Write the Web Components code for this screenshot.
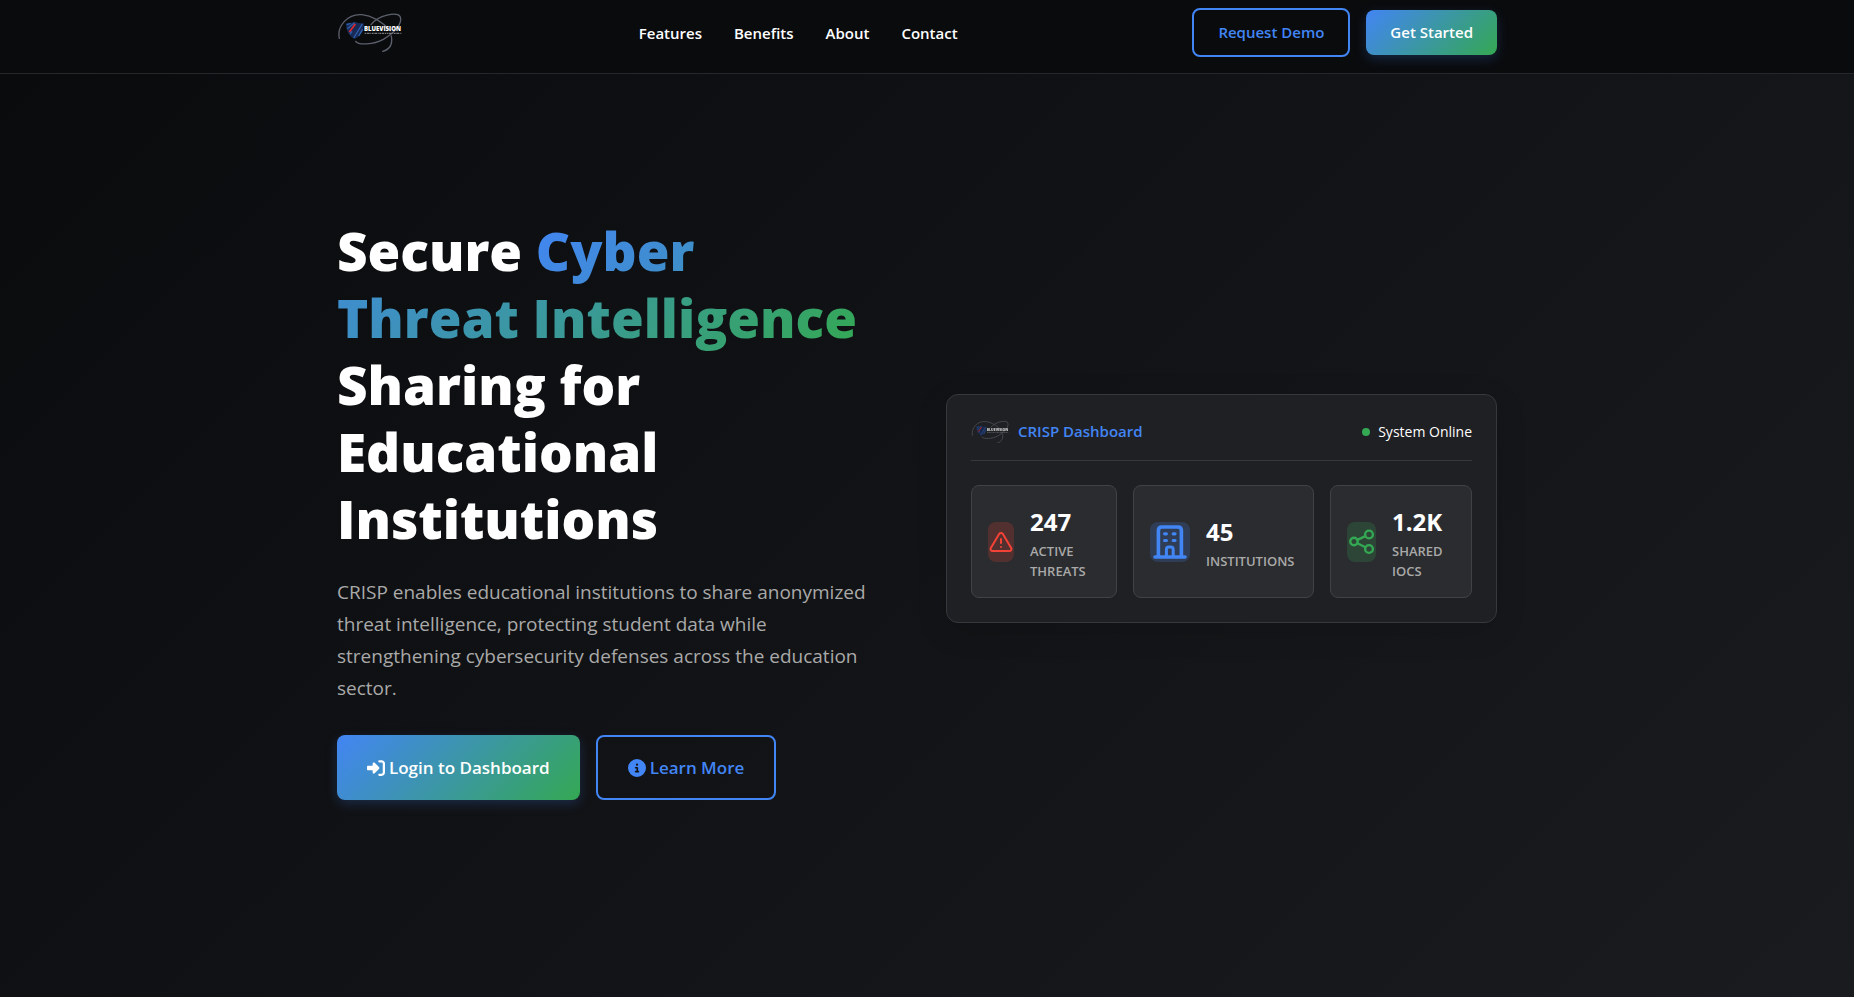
<!DOCTYPE html>
<html lang="en">
<head>
<meta charset="utf-8">
<meta name="viewport" content="width=device-width, initial-scale=1">
<title>CRISP – Cyber Threat Intelligence Sharing</title>
<style>
  html { background: #0a0b0d; }
  body {
    margin: 0;
    font-family: "Segoe UI", "Open Sans", "Noto Sans", sans-serif;
    color: #fff;
    --blue: #4285f4;
    --green: #34a853;
    --red: #f44336;
    --muted: #a9a9a9;
    --brand-gradient: linear-gradient(135deg, var(--blue) 0%, var(--green) 100%);
    --gutter: 20px;
    --container: 1160px;
  }
</style>
</head>
<body>
<landing-page></landing-page>

<script>
class BaseElement extends HTMLElement {
  constructor() {
    super();
    const template = document.createElement('template');
    template.innerHTML = this.constructor.markup;
    this.attachShadow({ mode: 'open' }).append(template.content.cloneNode(true));
  }
}

/* Shield with two orbit lines and the company name */
customElements.define('brand-logo', class extends BaseElement {
  static markup = `
    <style>
      :host { display: block; flex: none; width: 67px; }
      svg { display: block; width: 100%; height: auto; }
    </style>
    <svg viewBox="51 36 201 123" role="img" aria-label="BlueVision">
      <g fill="none" stroke="#5c606c" stroke-width="4" stroke-linecap="round">
        <path d="M58 115C50 78 84 40 126 44C158 47 186 66 212 92"/>
        <path d="M214 108C218 130 210 148 188 154"/>
        <path d="M107 124C116 136 160 134 190 118C222 100 250 70 240 49C230 36 176 44 153 74"/>
      </g>
      <path d="M78 70Q88 71 104 65Q120 71 131 69C132 94 122 108 104 117C86 108 78 92 78 70Z" fill="#182b57"/>
      <g fill="none" stroke="#2f5fae" stroke-width="4">
        <path d="M80 74L92 70M82 86L104 68M127 72L101 114M128 88L116 108M90 102L96 94"/>
      </g>
      <path d="M88 96L106 72" stroke="#e3262c" stroke-width="5"/>
      <text x="132" y="94" font-family="Open Sans, sans-serif" font-weight="800" font-size="18" fill="#fff">BLUEVISION</text>
      <path d="M134 100H245" stroke="#77797e" stroke-width="4" stroke-dasharray="5 2 8 2 3 2"/>
    </svg>`;
});

customElements.define('action-button', class extends BaseElement {
  static markup = `
    <style>
      :host { display: block; }
      button {
        display: flex; align-items: center; justify-content: center; gap: 4px;
        margin: 0; padding: 10px 24px; border: 0; border-radius: 8px;
        font: 600 15px/25px "Segoe UI", "Open Sans", "Noto Sans", sans-serif;
        color: #fff; background: var(--brand-gradient);
        box-shadow: 0 4px 12px rgba(66, 133, 244, .22);
        white-space: nowrap; cursor: pointer;
      }
      :host([outline]) button {
        border: 2px solid var(--blue); color: var(--blue);
        background: none; box-shadow: none;
      }
      :host([large]) button { padding: 18px 30px; font-size: 17px; line-height: 29px; }
      :host([large][outline]) button { padding: 16px 30px; }
      ::slotted(svg) { width: 18px; height: 18px; fill: currentColor; flex: none; }
    </style>
    <button type="button"><slot name="icon"></slot><slot></slot></button>`;
});

customElements.define('site-header', class extends BaseElement {
  static markup = `
    <style>
      :host { display: block; background: #0a0b0d; border-bottom: 1px solid #25272a; }
      header { padding: 8px var(--gutter) 16px 0; }
      .inner {
        max-width: var(--container); margin: 0 auto;
        display: flex; align-items: center; justify-content: space-between;
      }
      nav, .actions { display: flex; align-items: center; }
      nav { gap: 32px; }
      .actions { gap: 16px; }
      a { color: #fff; text-decoration: none; font-weight: 600; font-size: 15px; line-height: 24px; }
    </style>
    <header><div class="inner">
      <brand-logo></brand-logo>
      <nav aria-label="Main">
        <a href="#features">Features</a>
        <a href="#benefits">Benefits</a>
        <a href="#about">About</a>
        <a href="#contact">Contact</a>
      </nav>
      <div class="actions">
        <action-button outline>Request Demo</action-button>
        <action-button>Get Started</action-button>
      </div>
    </div></header>`;
});

customElements.define('stat-tile', class extends BaseElement {
  static markup = `
    <style>
      :host {
        display: flex; align-items: center; gap: 16px; box-sizing: border-box;
        padding: 16px; border: 1px solid #414245; border-radius: 8px; background: #2b2c2f;
        --tone: var(--blue); --tint: rgba(66, 133, 244, .2); --icon-box: 40px;
      }
      :host([tone="red"]) { --tone: var(--red); --tint: rgba(244, 67, 54, .2); --icon-box: 26px; }
      :host([tone="green"]) { --tone: var(--green); --tint: rgba(52, 168, 83, .2); --icon-box: 29px; }
      .icon {
        flex: none; width: var(--icon-box); height: 40px; border-radius: 8px;
        display: flex; align-items: center; justify-content: center;
        color: var(--tone); background: var(--tint);
      }
      .value { font-size: 24px; line-height: 39px; font-weight: 700; }
      .label { font-size: 13px; line-height: 20px; font-weight: 600; color: var(--muted); text-transform: uppercase; }
    </style>
    <div class="icon"><slot name="icon"></slot></div>
    <div>
      <div class="value"><slot name="value"></slot></div>
      <div class="label"><slot></slot></div>
    </div>`;
});

customElements.define('dashboard-card', class extends BaseElement {
  static markup = `
    <style>
      :host {
        display: block; box-sizing: border-box; padding: 24px;
        border: 1px solid #37383b; border-radius: 12px; background: #1f2023;
        box-shadow: 0 8px 32px rgba(0, 0, 0, .12);
      }
      .head {
        display: flex; align-items: center; justify-content: space-between;
        padding-bottom: 16px; margin-bottom: 24px; border-bottom: 1px solid #37383b;
      }
      .title, .status { display: flex; align-items: center; gap: 8px; }
      .title { color: var(--blue); }
      .title brand-logo { width: 39px; opacity: .75; }
      h2 { margin: 0; font-weight: 600; font-size: 15px; line-height: 25px; }
      .status { font-size: 14px; line-height: 22px; }
      .dot { width: 8px; height: 8px; border-radius: 50%; background: var(--green); }
      .stats { display: grid; grid-template-columns: 146fr 181fr 142fr; gap: 16px; }
      svg { display: block; fill: none; stroke: currentColor; stroke-linecap: round; stroke-linejoin: round; }
    </style>
    <div class="head">
      <div class="title"><brand-logo></brand-logo><h2>CRISP Dashboard</h2></div>
      <div class="status"><span class="dot"></span><span>System Online</span></div>
    </div>
    <div class="stats">
      <stat-tile tone="red">
        <svg slot="icon" width="24" height="24" viewBox="0 0 24 24" stroke-width="2">
          <path d="M10.29 3.86L1.82 18a2 2 0 0 0 1.71 3h16.94a2 2 0 0 0 1.71-3L13.71 3.86a2 2 0 0 0-3.42 0zM12 9v4M12 17h.01"/>
        </svg>
        <span slot="value">247</span>Active Threats
      </stat-tile>
      <stat-tile>
        <svg slot="icon" width="34" height="34" viewBox="0 0 34 34" stroke-width="3.6">
          <path d="M2 32H32M5.4 32V5.5Q5.4 2 8.8 2H25Q28.4 2 28.4 5.5V32"/>
          <path d="M13.4 31V24.5Q13.4 22 15.8 22H17.8Q20.2 22 20.2 24.5V31" stroke-width="3"/>
          <path d="M11.6 8.8h1.8M20.2 8.8h1.8M11.6 15.5h1.8M20.2 15.5h1.8" stroke-width="3.2"/>
        </svg>
        <span slot="value">45</span>Institutions
      </stat-tile>
      <stat-tile tone="green">
        <svg slot="icon" width="29" height="28" viewBox="0 0 29 28" stroke-width="2.4">
          <circle cx="7" cy="13.5" r="3.7"/><circle cx="22" cy="6.5" r="3.9"/><circle cx="22" cy="21" r="3.9"/>
          <path d="M10.4 11.9L18.4 8.2M10.4 15.2L18.4 19.2"/>
        </svg>
        <span slot="value">1.2K</span>Shared IoCs
      </stat-tile>
    </div>`;
});

customElements.define('hero-section', class extends BaseElement {
  static markup = `
    <style>
      :host { display: block; background: linear-gradient(135deg, #0a0b0d 0%, #1a1b1f 100%); }
      section { padding: 143px var(--gutter) 143px 0; }
      .inner {
        max-width: var(--container); margin: 0 auto;
        display: grid; grid-template-columns: 1fr 1fr; gap: 58px; align-items: center;
      }
      h1 { margin: 0 0 24px; font-size: 53px; line-height: 67px; font-weight: 800; }
      h1 span { background: var(--brand-gradient); -webkit-background-clip: text; background-clip: text; color: transparent; }
      p { margin: 0 0 31px; font-size: 19px; line-height: 32px; color: var(--muted); }
      .actions { display: flex; gap: 16px; }
    </style>
    <section><div class="inner">
      <div>
        <h1>Secure <span>Cyber Threat Intelligence</span> Sharing for Educational Institutions</h1>
        <p>CRISP enables educational institutions to share anonymized threat intelligence, protecting student data while strengthening cybersecurity defenses across the education sector.</p>
        <div class="actions">
          <action-button large>
            <svg slot="icon" viewBox="0 0 512 512" aria-hidden="true"><path d="M217.900 105.900L340.700 228.700c7.200 7.200 11.300 17.100 11.300 27.300s-4.100 20.100-11.300 27.300L217.900 406.100c-6.400 6.400-15 9.900-24 9.900c-18.700 0-33.900-15.200-33.900-33.900l0-62.100L32 320c-17.700 0-32-14.300-32-32l0-64c0-17.700 14.300-32 32-32l128 0 0-62.100c0-18.700 15.200-33.900 33.900-33.900c9 0 17.600 3.600 24 9.900zM352 416l64 0c17.700 0 32-14.300 32-32l0-256c0-17.700-14.300-32-32-32l-64 0c-17.700 0-32-14.300-32-32s14.300-32 32-32l64 0c53 0 96 43 96 96l0 256c0 53-43 96-96 96l-64 0c-17.700 0-32-14.300-32-32s14.300-32 32-32z"/></svg>
            Login to Dashboard</action-button>
          <action-button large outline>
            <svg slot="icon" viewBox="0 0 512 512" aria-hidden="true"><path d="M256 512A256 256 0 1 0 256 0a256 256 0 1 0 0 512zM216 336l24 0 0-64-24 0c-13.300 0-24-10.700-24-24s10.700-24 24-24l48 0c13.300 0 24 10.700 24 24l0 88 8 0c13.300 0 24 10.700 24 24s-10.700 24-24 24l-80 0c-13.300 0-24-10.700-24-24s10.700-24 24-24zm40-208a32 32 0 1 1 0 64 32 32 0 1 1 0-64z"/></svg>
            Learn More</action-button>
        </div>
      </div>
      <dashboard-card></dashboard-card>
    </div></section>`;
});

customElements.define('landing-page', class extends BaseElement {
  static markup = `
    <style>
      :host { display: flex; flex-direction: column; min-height: 100vh; }
      hero-section { flex: 1; }
    </style>
    <site-header></site-header>
    <hero-section></hero-section>`;
});
</script>
</body>
</html>
